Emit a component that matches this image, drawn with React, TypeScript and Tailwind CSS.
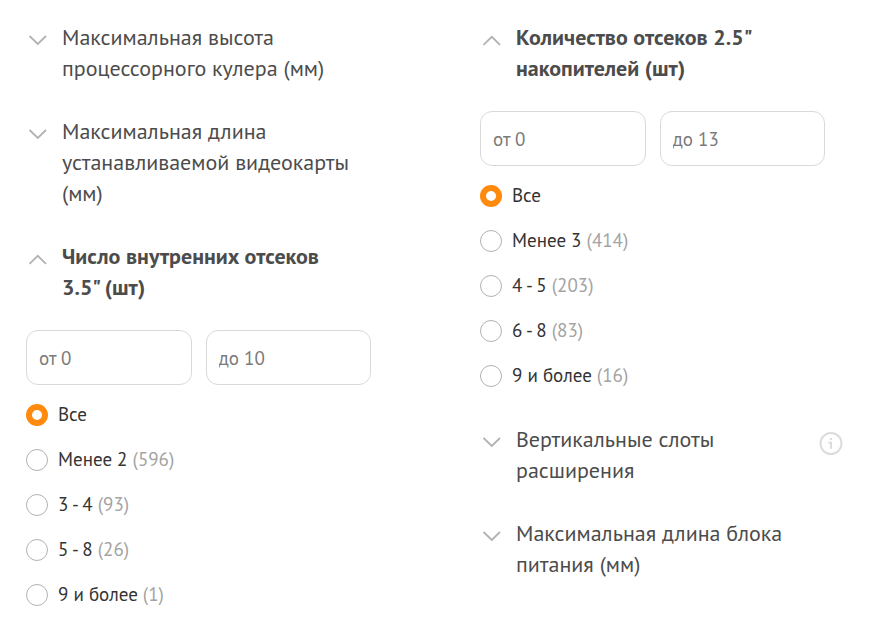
import React, { useId, useState } from 'react';

type Option = { label: string; count?: number };

function Chevron({ open }: { open: boolean }) {
  return (
    <svg className="mt-3 h-3 w-6 shrink-0" viewBox="0 0 24 12" fill="none" stroke="#b2b2b2" strokeWidth="1.8" aria-hidden="true">
      <path d={open ? 'M3.5 10.8 L11.8 2.8 L20 10.8' : 'M3.5 2 L11.8 10 L20 2'} />
    </svg>
  );
}

function InfoButton() {
  return (
    <button type="button" aria-label="Подробнее" className="mt-2 h-6 w-6 shrink-0 cursor-pointer">
      <svg className="h-6 w-6" viewBox="0 0 24 24" fill="none" stroke="#dcdcdc" aria-hidden="true">
        <circle cx="12" cy="11.5" r="10.5" strokeWidth="2" />
        <path d="M9.5 10.7 H12 V16.8" strokeWidth="2" />
        <path d="M10.8 7 H13" strokeWidth="2" />
      </svg>
    </button>
  );
}

function FilterTitle({ title, open = false, info = false, onToggle }: { title: string; open?: boolean; info?: boolean; onToggle?: () => void }) {
  return (
    <div className="flex items-start justify-between">
      <h3 className="max-w-[328px]">
        <button
          type="button"
          aria-expanded={open}
          onClick={onToggle}
          className={`flex cursor-pointer items-start gap-3 text-left text-[22px] leading-[31px] text-[#4c4c4c] ${open ? 'font-bold' : 'font-normal'}`}
        >
          <Chevron open={open} />
          <span>{title}</span>
        </button>
      </h3>
      {info && <InfoButton />}
    </div>
  );
}

function RangeFilter({ title, from, to, options }: { title: string; from: string; to: string; options: Option[] }) {
  const id = useId();
  const [open, setOpen] = useState(true);
  const inputStyle =
    'h-[55px] w-full min-w-0 flex-1 rounded-xl border border-[#d9d9d9] bg-white px-3 text-[19px] text-[#333] outline-none placeholder:text-[#7a7a7a] focus:border-[#ff8a0d]';
  return (
    <section>
      <FilterTitle title={title} open={open} onToggle={() => setOpen(!open)} />
      {open && (
        <>
          <div className="mt-[27px] flex gap-[14px] pr-[18px]">
            <input type="text" inputMode="numeric" aria-label={`${title}, от`} placeholder={from} className={inputStyle} />
            <input type="text" inputMode="numeric" aria-label={`${title}, до`} placeholder={to} className={inputStyle} />
          </div>
          <fieldset className="mt-[7px]">
            {options.map((option, i) => (
              <label key={option.label} className="flex h-[45px] cursor-pointer items-center gap-[10px] text-[19px] text-[#333]">
                <input
                  type="radio"
                  name={id}
                  defaultChecked={i === 0}
                  className="h-[22px] w-[22px] shrink-0 appearance-none rounded-full border border-[#b2b2b2] bg-white checked:border-[6px] checked:border-[#ff8a0d]"
                />
                <span>
                  {option.label}
                  {option.count !== undefined && <span className="text-[#a3a3a3]"> ({option.count})</span>}
                </span>
              </label>
            ))}
          </fieldset>
        </>
      )}
    </section>
  );
}

export default function App() {
  return (
    <main className="grid grid-cols-2 items-start gap-x-[91px] bg-white pt-[22px] pr-[30px] pb-5 pl-[26px] font-['PT_Sans','Noto_Sans',sans-serif]">
      <div className="flex flex-col gap-8">
        <FilterTitle title="Максимальная высота процессорного кулера (мм)" />
        <FilterTitle title="Максимальная длина устанавливаемой видеокарты (мм)" />
        <RangeFilter
          title={'Число внутренних отсеков 3.5" (шт)'}
          from="от 0"
          to="до 10"
          options={[
            { label: 'Все' },
            { label: 'Менее 2', count: 596 },
            { label: '3 - 4', count: 93 },
            { label: '5 - 8', count: 26 },
            { label: '9 и более', count: 1 },
          ]}
        />
      </div>
      <div className="flex flex-col">
        <RangeFilter
          title={'Количество отсеков 2.5" накопителей (шт)'}
          from="от 0"
          to="до 13"
          options={[
            { label: 'Все' },
            { label: 'Менее 3', count: 414 },
            { label: '4 - 5', count: 203 },
            { label: '6 - 8', count: 83 },
            { label: '9 и более', count: 16 },
          ]}
        />
        <div className="mt-[26px] flex flex-col gap-8">
          <FilterTitle title="Вертикальные слоты расширения" info />
          <FilterTitle title="Максимальная длина блока питания (мм)" />
        </div>
      </div>
    </main>
  );
}
